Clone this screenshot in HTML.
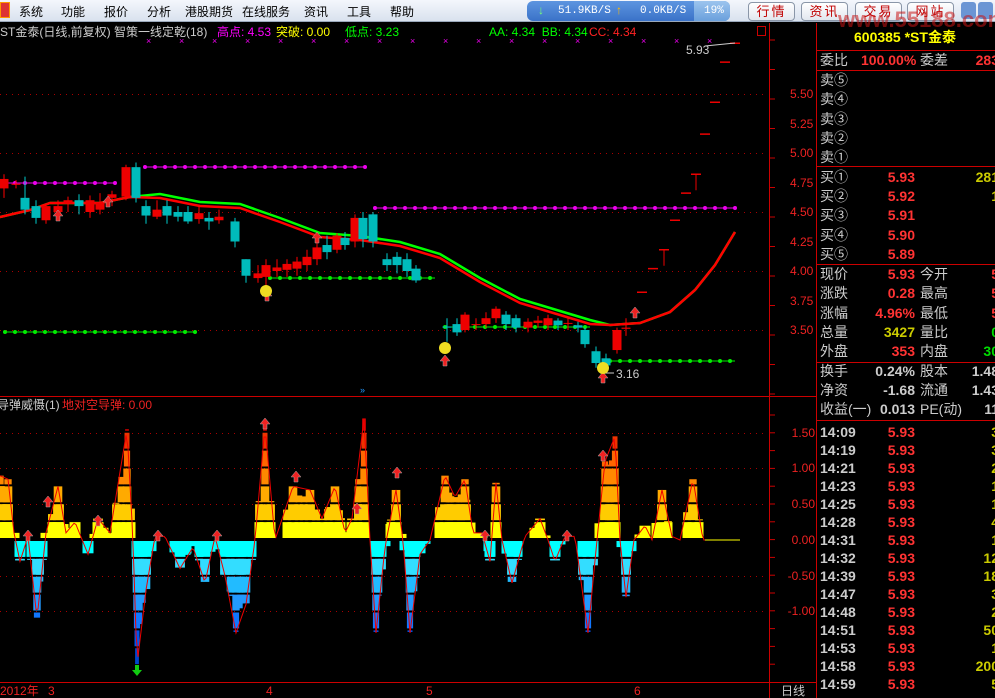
<!DOCTYPE html>
<html><head><meta charset="utf-8"><style>
*{margin:0;padding:0;box-sizing:border-box}
body{width:995px;height:698px;background:#000;overflow:hidden;position:relative;font-family:"Liberation Sans","Noto Sans CJK SC",sans-serif;font-size:12px}
.menu{position:absolute;left:0;top:0;width:995px;height:22px;background:linear-gradient(#f4f7fc,#d9e2ee);border-bottom:1px solid #9aa8bb}
.menu span{position:absolute;top:3px;font-size:12px;color:#000}
.t{position:absolute;white-space:nowrap;line-height:1}
.rp .t{font-size:14px}
.rp .b{font-weight:bold}
.btn{position:absolute;top:2px;height:19px;border:1px solid #8a96a8;border-radius:4px;background:linear-gradient(#fff,#e2e7ef);color:#c00000;font-size:13px;text-align:center;line-height:17px;letter-spacing:2px}
</style></head><body>
<div class="menu">
<div style="position:absolute;left:0;top:2px;width:10px;height:16px;background:#d33;border:1px solid #f90"></div>
<span style="left:19px">系统</span><span style="left:61px">功能</span><span style="left:104px">报价</span><span style="left:147px">分析</span><span style="left:185px">港股期货</span><span style="left:242px">在线服务</span><span style="left:304px">资讯</span><span style="left:347px">工具</span><span style="left:390px">帮助</span>
<div style="position:absolute;left:527px;top:1px;width:203px;height:20px;border-radius:6px;background:linear-gradient(#5d95e0,#3a72c8)"></div>
<div style="position:absolute;left:694px;top:1px;width:36px;height:20px;border-radius:0 6px 6px 0;background:linear-gradient(#9cc4ee,#6aa0dc)"></div>
<span style="left:538px;top:3px;color:#7f7;font-weight:bold">↓</span>
<span style="left:558px;color:#fff;font-family:'Liberation Mono',monospace;font-size:11px;top:5px">51.9KB/S</span>
<span style="left:616px;top:3px;color:#fb0;font-weight:bold">↑</span>
<span style="left:640px;color:#fff;font-family:'Liberation Mono',monospace;font-size:11px;top:5px">0.0KB/S</span>
<span style="left:704px;color:#fff;font-family:'Liberation Mono',monospace;font-size:11px;top:5px">19%</span>
<div class="btn" style="left:748px;width:47px">行情</div>
<div class="btn" style="left:801px;width:47px">资讯</div>
<div class="btn" style="left:855px;width:47px">交易</div>
<div class="btn" style="left:907px;width:47px">网站</div>
<div style="position:absolute;left:961px;top:2px;width:15px;height:17px;border-radius:3px;background:#6b95d4"></div>
<div style="position:absolute;left:978px;top:2px;width:15px;height:17px;border-radius:3px;background:#6b95d4"></div>
</div>
<div class="t" style="left:838px;top:9px;font-size:22px;font-weight:bold;color:rgba(200,20,20,.55)">www.55188.com</div>

<svg width="995" height="698" style="position:absolute;left:0;top:0" id="s">
<g stroke="#c00" stroke-width="1">
<line x1="769.5" y1="23" x2="769.5" y2="698"/>
<line x1="816.5" y1="23" x2="816.5" y2="698"/>
<line x1="0" y1="396.5" x2="816" y2="396.5"/>
<line x1="0" y1="682.5" x2="816" y2="682.5"/>
<line x1="816" y1="50.5" x2="995" y2="50.5"/>
<line x1="816" y1="70.5" x2="995" y2="70.5"/>
<line x1="816" y1="166.5" x2="995" y2="166.5"/>
<line x1="816" y1="264.5" x2="995" y2="264.5"/>
<line x1="816" y1="362.5" x2="995" y2="362.5"/>
<line x1="816" y1="420.5" x2="995" y2="420.5"/>
<rect x="757.5" y="26.5" width="8" height="9" fill="none"/>
</g>
<g id="g"></g>
</svg>

<div class="t" style="left:0;top:26px;color:#ccc">ST金泰(日线,前复权) 智策一线定乾(18)</div>
<div class="t" style="left:217px;top:26px;color:#f0f">高点: 4.53</div>
<div class="t" style="left:276px;top:26px;color:#ff0">突破: 0.00</div>
<div class="t" style="left:345px;top:26px;color:#0f0">低点: 3.23</div>
<div class="t" style="left:489px;top:26px;color:#0f0">AA: 4.34&nbsp; BB: 4.34</div>
<div class="t" style="left:589px;top:26px;color:#f22">CC: 4.34</div>
<div class="t" style="left:686px;top:44px;color:#ccc">5.93</div>
<div class="t" style="left:616px;top:368px;color:#ccc">3.16</div>
<div class="t" style="left:-3px;top:399px;color:#ccc">导弹威慑(1)</div>
<div class="t" style="left:62px;top:399px;color:#e22">地对空导弹: 0.00</div>
<div class="t" style="left:0;top:685px;color:#e22">2012年</div>
<div class="t" style="left:48px;top:685px;color:#e22">3</div>
<div class="t" style="left:266px;top:685px;color:#e22">4</div>
<div class="t" style="left:426px;top:685px;color:#e22">5</div>
<div class="t" style="left:634px;top:685px;color:#e22">6</div>
<div class="t" style="left:781px;top:685px;color:#ccc">日线</div>
<div id="ax"></div>

<div class="rp" style="position:absolute;left:816px;top:0;width:179px;height:698px">
<div class="t" style="left:38px;top:30px;color:#ff0;font-weight:bold">600385 *ST金泰</div>
<div id="rows"></div>
</div>

<script>
var g=document.getElementById('g'),NS='http://www.w3.org/2000/svg';
function el(n,a){var e=document.createElementNS(NS,n);for(var k in a)e.setAttribute(k,a[k]);g.appendChild(e);return e}
function Y(p){return 330-(p-3.5)*118}
function L(v){return 540-v*71.5}
[94,153,212,271,330].forEach(function(y){el('line',{x1:0,y1:y+.5,x2:768,y2:y+.5,stroke:'#a00','stroke-dasharray':'1 5'})});
[433,468,504,576,611].forEach(function(y){el('line',{x1:0,y1:y+.5,x2:768,y2:y+.5,stroke:'#a00','stroke-dasharray':'1 5'})});
for(var y=40;y<396;y+=29.5)el('line',{x1:770,y1:y,x2:775,y2:y,stroke:'#c00'});
for(var y=415;y<680;y+=17.8)el('line',{x1:770,y1:y,x2:775,y2:y,stroke:'#c00'});
var ax=document.getElementById('ax'),h='';
[['5.50',94],['5.25',124],['5.00',153],['4.75',183],['4.50',212],['4.25',242],['4.00',271],['3.75',301],['3.50',330]].forEach(function(a){h+='<div class="t" style="left:790px;top:'+(a[1]-6)+'px;color:#e22;font-size:12px">'+a[0]+'</div>'});
[['1.50',433],['1.00',468],['0.50',504],['0.00',540],['-0.50',576],['-1.00',611]].forEach(function(a){h+='<div class="t" style="right:'+(995-815)+'px;top:'+(a[1]-6)+'px;color:#e22;font-size:12px">'+a[0]+'</div>'});
ax.innerHTML=h;
function dots(x1,x2,y,c){for(var x=x1;x<=x2;x+=10)el('circle',{cx:x,cy:y,r:2,fill:c});el('line',{x1:x1,y1:y,x2:x2,y2:y,stroke:c,'stroke-width':1})}
dots(5,115,183,'#e0e');dots(145,365,167,'#e0e');dots(375,735,208,'#e0e');
dots(5,197,332,'#0e0');dots(270,435,278,'#0e0');dots(445,590,327,'#0e0');dots(610,735,361,'#0e0');
for(var x=146;x<735;x+=33){el('text',{x:x,y:44,fill:'#e0e','font-size':9}).textContent='×'}
var ma=[[0,217],[30,210],[50,203],[100,203],[130,197],[160,198],[200,206],[240,208],[280,222],[320,237],[360,240],[400,246],[440,258],[480,282],[520,303],[560,315],[590,324],[610,325],[640,323],[670,312],[695,290],[715,265],[735,232]];
function pts(a,d){return a.map(function(p){var o=(p[0]>150&&p[0]<610)?d:0;return p[0]+','+(p[1]+o)}).join(' ')}
el('polyline',{points:pts(ma,-4),fill:'none',stroke:'#0f0','stroke-width':2.5});
el('polyline',{points:pts(ma,0),fill:'none',stroke:'#f00','stroke-width':2.5});
var c=[[4,4.7,4.78,4.82,4.62],[16,4.73,4.74,4.77,4.7],[25,4.62,4.52,4.8,4.48],[36,4.55,4.45,4.6,4.4],[46,4.43,4.55,4.57,4.4],[58,4.5,4.55,4.6,4.45],[68,4.57,4.6,4.63,4.5],[79,4.6,4.55,4.65,4.48],[90,4.5,4.6,4.64,4.45],[100,4.52,4.58,4.66,4.48],[112,4.62,4.65,4.68,4.55],[126,4.63,4.88,4.9,4.6],[136,4.88,4.62,4.92,4.58],[146,4.55,4.47,4.6,4.4],[157,4.46,4.52,4.6,4.44],[167,4.55,4.47,4.6,4.4],[178,4.5,4.46,4.55,4.42],[188,4.5,4.42,4.55,4.4],[199,4.44,4.49,4.55,4.4],[209,4.45,4.42,4.5,4.35],[219,4.43,4.46,4.52,4.4],[235,4.42,4.25,4.45,4.2],[246,4.1,3.96,4.1,3.9],[258,3.94,3.98,4.05,3.9],[266,3.95,4.05,4.1,3.85],[277,4.0,4.03,4.1,3.95],[287,4.01,4.06,4.1,3.95],[297,4.02,4.08,4.12,3.96],[307,4.05,4.12,4.18,4.0],[317,4.1,4.2,4.25,4.05],[327,4.22,4.16,4.3,4.1],[337,4.18,4.3,4.32,4.15],[345,4.28,4.22,4.33,4.18],[355,4.25,4.45,4.48,4.2],[363,4.45,4.27,4.5,4.2],[373,4.48,4.25,4.5,4.2],[387,4.1,4.05,4.15,4.0],[397,4.12,4.05,4.16,3.98],[407,4.1,4.0,4.15,3.95],[416,4.02,3.92,4.05,3.9],[447,3.53,3.52,3.6,3.4],[457,3.55,3.48,3.6,3.45],[465,3.5,3.63,3.65,3.48],[476,3.55,3.55,3.6,3.5],[486,3.55,3.6,3.65,3.52],[496,3.6,3.68,3.7,3.56],[506,3.63,3.55,3.66,3.5],[516,3.6,3.52,3.63,3.48],[528,3.52,3.57,3.6,3.48],[538,3.56,3.58,3.62,3.52],[548,3.54,3.6,3.63,3.5],[558,3.58,3.54,3.6,3.5],[568,3.56,3.56,3.6,3.5],[578,3.54,3.52,3.57,3.48],[585,3.5,3.38,3.52,3.35],[596,3.32,3.22,3.36,3.18],[606,3.26,3.2,3.3,3.16],[617,3.33,3.5,3.52,3.3],[626,3.51,3.52,3.6,3.45]];
c.forEach(function(k){var x=k[0],up=k[2]>=k[1],col=up?'#e00':'#0bb';
el('line',{x1:x,y1:Y(k[3]),x2:x,y2:Y(k[4]),stroke:up?'#f00':'#0cc'});
var t=Y(Math.max(k[1],k[2])),b=Y(Math.min(k[1],k[2]));el('rect',{x:x-4.5,y:t,width:9,height:Math.max(1,b-t),fill:col});});
[[642,3.82],[653,4.02],[664,4.18],[675,4.43],[686,4.66],[696,4.82],[705,5.16],[715,5.43],[725,5.77],[735,5.93]].forEach(function(k,i){el('line',{x1:k[0]-5,y1:Y(k[1]),x2:k[0]+5,y2:Y(k[1]),stroke:'#e00','stroke-width':1.5});if(i==2||i==5)el('line',{x1:k[0],y1:Y(k[1]),x2:k[0],y2:Y(k[1])+16,stroke:'#e00'})});
el('line',{x1:705,y1:46,x2:735,y2:43,stroke:'#ccc'});el('line',{x1:600,y1:373,x2:614,y2:373,stroke:'#ccc'});
var kp=[[0,0.9],[8,0.85],[14,0.1],[20,-0.3],[28,0.05],[37,-1.1],[46,0.1],[58,0.75],[66,0.1],[75,0.25],[88,-0.2],[98,0.3],[110,0.1],[127,1.55],[133,0],[137,-1.75],[146,-0.7],[155,0.05],[165,0.05],[180,-0.4],[193,-0.1],[205,-0.6],[215,0.05],[225,-0.5],[236,-1.3],[246,-0.9],[255,0],[265,1.6],[275,0],[293,0.75],[310,0.7],[322,0.3],[335,0.75],[345,0.1],[352,0.3],[364,1.7],[370,0],[376,-1.3],[385,-0.1],[396,0.7],[403,0],[410,-1.3],[420,-0.2],[430,0],[445,0.9],[455,0.6],[465,0.85],[473,0.1],[482,0.1],[490,-0.3],[496,0.8],[502,0],[512,-0.6],[525,0.05],[540,0.3],[548,0],[555,-0.3],[565,0.05],[575,0.05],[588,-1.3],[597,0],[605,1.1],[615,1.45],[620,0],[626,-0.8],[634,0],[645,0.2],[652,0],[662,0.7],[672,0.05],[680,0],[693,0.85],[703,0],[740,0]];
function iv(x){for(var i=1;i<kp.length;i++)if(x<=kp[i][0]){var a=kp[i-1],b=kp[i];return a[1]+(b[1]-a[1])*(x-a[0])/(b[0]-a[0])}return 0}
var pc=['#ff0','#fc0','#fa0','#f80','#f60','#e30','#c00'],nc=['#0ff','#3df','#2bf','#29f','#17f','#05e','#04c'];
function col(x,v,w0){if(Math.abs(v)<0.06)return;var n=Math.abs(v)/0.25,s=v>0?-1:1,arr=v>0?pc:nc;
for(var i=0;i<Math.ceil(n);i++){var hh=Math.min(1,n-i)*0.25*71.5;var w=Math.max(2,w0-i*1.2);var y0=540+s*i*0.25*71.5;
el('rect',{x:x-w/2,y:s<0?y0-hh:y0+1,width:w,height:Math.max(1,hh-2),fill:arr[Math.min(i,6)]});}}
kp.forEach(function(p){if(Math.abs(p[1])>=0.1){col(p[0]-6,iv(p[0]-6)*0.85,9);col(p[0]+6,iv(p[0]+6)*0.85,9);}});
kp.forEach(function(p){if(Math.abs(p[1])>=0.1)col(p[0],p[1],11)});
var pp=[];for(var x=0;x<=740;x+=2)pp.push(x+','+L(iv(x)));
el('polyline',{points:pp.join(' '),fill:'none',stroke:'#e00','stroke-width':1});
el('line',{x1:705,y1:540,x2:740,y2:540,stroke:'#ff0','stroke-width':1});
function ar(x,y,c){el('path',{d:'M'+x+' '+y+'l-5 6h3v5h4v-5h3z',fill:c||'#e22',stroke:'#aaa','stroke-width':.5})}
[[58,210],[108,196],[267,290],[317,232],[445,355],[603,372],[635,307],[265,418],[296,471],[357,503],[397,467],[603,450],[48,496],[28,530],[98,515],[158,530],[217,530],[485,530],[567,530]].forEach(function(a){ar(a[0],a[1])});
el('circle',{cx:266,cy:291,r:6,fill:'#ed2'});el('circle',{cx:445,cy:348,r:6,fill:'#ed2'});el('circle',{cx:603,cy:368,r:6,fill:'#ed2'});
el('path',{d:'M137 676l-5-6h3v-5h4v5h3z',fill:'#1c1'});
el('text',{x:360,y:393,fill:'#29f','font-size':9}).textContent='»';
var R=document.getElementById('rows'),o='';
function t(x,y,s,c,al,b){o+='<div class="t'+(b?' b':'')+'" style="'+(al?'right:'+(179-x)+'px':'left:'+x+'px')+';top:'+(y-7)+'px;color:'+c+'">'+s+'</div>'}
t(4,60,'委比','#ccc');t(45,60,'100.00%','#f33',0,1);t(104,60,'委差','#ccc');t(183,60,'283','#f33',1,1);
['卖⑤','卖④','卖③','卖②','卖①'].forEach(function(s,i){t(4,80+i*19.3,s,'#ccc')});
[['5.93','281'],['5.92','1'],['5.91',''],['5.90',''],['5.89','']].forEach(function(a,i){var y=177+i*19.2;t(4,y,'买'+'①②③④⑤'[i],'#ccc');t(99,y,a[0],'#f33',1,1);t(183,y,a[1],'#cc0',1,1)});
[['现价','5.93','#f33','今开','5','#f33'],['涨跌','0.28','#f33','最高','5','#f33'],['涨幅','4.96%','#f33','最低','5','#f33'],['总量','3427','#cc0','量比','0','#0d0'],['外盘','353','#f33','内盘','30','#0d0']].forEach(function(a,i){var y=274+i*19.3;t(4,y,a[0],'#ccc');t(99,y,a[1],a[2],1,1);t(104,y,a[3],'#ccc');t(183,y,a[4],a[5],1,1)});
[['换手','0.24%','股本','1.48'],['净资','-1.68','流通','1.43'],['收益(一)','0.013','PE(动)','11']].forEach(function(a,i){var y=371+i*19;t(4,y,a[0],'#ccc');t(99,y,a[1],'#ccc',1,1);t(104,y,a[2],'#ccc');t(183,y,a[3],'#ccc',1,1)});
[['14:09','3'],['14:19','3'],['14:21','2'],['14:23','1'],['14:25','1'],['14:28','4'],['14:31','1'],['14:32','12'],['14:39','18'],['14:47','3'],['14:48','2'],['14:51','50'],['14:53','1'],['14:58','200'],['14:59','5']].forEach(function(a,i){var y=432+i*18;t(4,y,a[0],'#ccc',0,1);t(99,y,'5.93','#f33',1,1);t(183,y,a[1],'#cc0',1,1)});
R.innerHTML=o;
</script>
</body></html>
